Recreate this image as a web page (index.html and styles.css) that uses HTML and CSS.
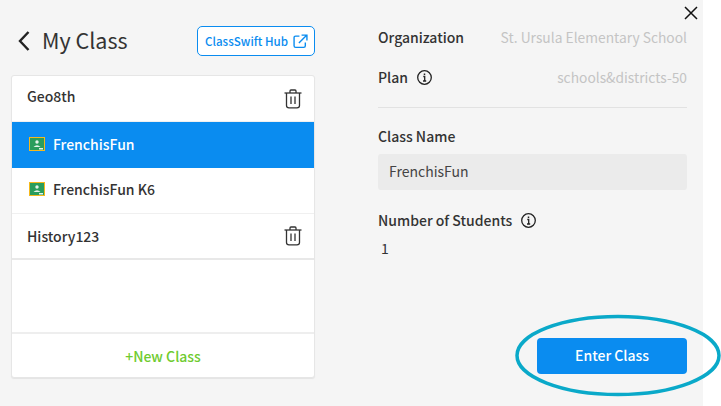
FILE: index.html
```html
<!DOCTYPE html>
<html>
<head>
	<meta charset="utf-8">
	<title>My Class</title>
	<link rel="stylesheet" href="styles.css">
</head>
<body>
	<div class="modal">
		<div class="left">
			<div class="top">
				<div class="title">
					<svg class="back" width="14" height="22" viewBox="0 0 14 22"><path d="M11.500 2 L3 11 L11.500 20" fill="none" stroke="#222" stroke-width="2.400"/></svg>
					<h2>My Class</h2>
				</div>
				<a class="hub">ClassSwift Hub
					<svg width="15" height="15" viewBox="0 0 14 14" fill="none" stroke="#0a8cf0" stroke-width="1.300"><path d="M6 2 H2.500 Q1 2 1 3.500 V11 Q1 12.500 2.500 12.500 H10 Q11.500 12.500 11.500 11 V8"/><path d="M5.500 8.500 L12.500 1.500 M8 1 H13 V6"/></svg>
				</a>
			</div>
			<div class="card">
				<ul>
					<li>
						<span>Geo8th</span>
						<svg class="trash" width="18" height="20" viewBox="0 0 18 20" fill="none" stroke="#333" stroke-width="1.300"><path d="M0.500 4 H17.500"/><path d="M6 4 V2 Q6 1 7 1 H11 Q12 1 12 2 V4"/><path d="M2.500 4 V16.500 Q2.500 18.800 5 18.800 H13 Q15.500 18.800 15.500 16.500 V4"/><path d="M7 7.500 V15 M11 7.500 V15"/></svg>
					</li>
					<li class="active">
						<span class="cname">
							<svg class="gc" width="16" height="14" viewBox="0 0 16 14"><rect x="0.500" y="0.500" width="15" height="13" fill="#2a9d5c" stroke="#f5b81c"/><circle cx="8" cy="5" r="1.700" fill="#e4f3ea"/><path d="M4.500 10 Q8 6.500 11.500 10 Z" fill="#e4f3ea"/><rect x="10" y="11" width="4" height="1.500" fill="#e4f3ea"/></svg>
							FrenchisFun
						</span>
					</li>
					<li>
						<span class="cname">
							<svg class="gc" width="16" height="14" viewBox="0 0 16 14"><rect x="0.500" y="0.500" width="15" height="13" fill="#2a9d5c" stroke="#f5b81c"/><circle cx="8" cy="5" r="1.700" fill="#e4f3ea"/><path d="M4.500 10 Q8 6.500 11.500 10 Z" fill="#e4f3ea"/><rect x="10" y="11" width="4" height="1.500" fill="#e4f3ea"/></svg>
							FrenchisFun K6
						</span>
					</li>
					<li class="last">
						<span>History123</span>
						<svg class="trash" width="18" height="20" viewBox="0 0 18 20" fill="none" stroke="#333" stroke-width="1.300"><path d="M0.500 4 H17.500"/><path d="M6 4 V2 Q6 1 7 1 H11 Q12 1 12 2 V4"/><path d="M2.500 4 V16.500 Q2.500 18.800 5 18.800 H13 Q15.500 18.800 15.500 16.500 V4"/><path d="M7 7.500 V15 M11 7.500 V15"/></svg>
					</li>
				</ul>
				<div class="newclass">+New Class</div>
			</div>
		</div>
		<div class="right">
			<svg class="close" width="14" height="14" viewBox="0 0 14 14"><path d="M1 1 L13 13 M13 1 L1 13" stroke="#111" stroke-width="1.500"/></svg>
			<div class="row">
				<b>Organization</b>
				<span>St. Ursula Elementary School</span>
			</div>
			<div class="row plan">
				<b class="info">Plan
					<svg width="15" height="15" viewBox="0 0 15 15" fill="none" stroke="#222" stroke-width="1.300"><circle cx="7.500" cy="7.500" r="6.800"/><path d="M6.300 6.500 H7.700 V11 M6 11 H9.200"/><path d="M7.500 3.500 V5" stroke-width="1.500"/></svg>
				</b>
				<span>schools&amp;districts-50</span>
			</div>
			<hr>
			<b class="label">Class Name</b>
			<div class="field">FrenchisFun</div>
			<b class="label info">Number of Students
				<svg width="15" height="15" viewBox="0 0 15 15" fill="none" stroke="#222" stroke-width="1.300"><circle cx="7.500" cy="7.500" r="6.800"/><path d="M6.300 6.500 H7.700 V11 M6 11 H9.200"/><path d="M7.500 3.500 V5" stroke-width="1.500"/></svg>
			</b>
			<div class="count">1</div>
			<div class="actions">
				<a class="enter">Enter Class</a>
			</div>
		</div>
	</div>
	<svg class="ring" width="208" height="85" viewBox="0 0 208 85"><ellipse cx="104" cy="42.500" rx="101" ry="39" fill="none" stroke="#0aa9c9" stroke-width="3.500"/></svg>
</body>
</html>
```

FILE: styles.css
```css
*{
	margin: 0;
	padding: 0;
	box-sizing: border-box;
}
html,body{
	height: 100%;
}
body{
	background: #fff;
	font-family: "Noto Sans CJK SC", "Noto Sans", sans-serif;
	color: #333;
	overflow: hidden;
}
.modal{
	display: flex;
	width: 703px;
	height: 406px;
	background: #f5f5f5;
}
.left{
	width: 315px;
	padding: 26px 0 0 11px;
	flex: none;
}
.top{
	display: flex;
	align-items: center;
	justify-content: space-between;
	height: 30px;
	margin-bottom: 19px;
}
.title{
	display: flex;
	align-items: center;
	padding-left: 6px;
}
.back{
	margin-right: 11px;
}
h2{
	font-weight: 400;
	font-size: 21.500px;
	line-height: 30px;
	margin-bottom: 2px;
	color: #333;
}
.hub{
	display: flex;
	align-items: center;
	justify-content: space-between;
	width: 118px;
	height: 30px;
	padding: 0 6px 0 7px;
	border: 1px solid #0a8cf0;
	border-radius: 5px;
	background: #fff;
	color: #0a8cf0;
	font-size: 11.600px;
	font-weight: 500;
	white-space: nowrap;
}
.card{
	height: 303px;
	background: #fff;
	border: 1px solid #e6e6e6;
	border-radius: 3px;
	display: flex;
	flex-direction: column;
	box-shadow: 0 1px 1px #e4e4e4;
}
.card ul{
	flex: 1;
	list-style: none;
}
.card li{
	display: flex;
	align-items: center;
	justify-content: space-between;
	height: 46px;
	padding: 0 12px 0 15px;
	border-bottom: 1px solid #f0f0f0;
	font-size: 14px;
	font-weight: 500;
	color: #333;
}
.card li span{
	margin-bottom: 3px;
}
.card li:first-child span{
	margin-bottom: 5px;
}
.card li.last span{
	margin-bottom: 1px;
}
.card li.last{
	border-bottom: 2px solid #e8e8e8;
}
.card li.active{
	background: #0a8cf0;
	color: #fff;
	border-bottom: 0;
}
.cname{
	display: flex;
	align-items: center;
	gap: 8px;
	padding-left: 2px;
}
.newclass{
	height: 45px;
	line-height: 45px;
	text-align: center;
	border-top: 2px solid #eee;
	color: #6fcb2f;
	font-size: 14px;
	font-weight: 500;
}
.right{
	position: relative;
	flex: 1;
	padding: 26px 16px 0 63px;
	display: flex;
	flex-direction: column;
}
.close{
	position: absolute;
	right: 5px;
	top: 6px;
}
.row{
	display: flex;
	justify-content: space-between;
	align-items: center;
	height: 22px;
	margin-bottom: 18px;
}
.row b,.label{
	font-size: 14px;
	font-weight: 500;
	color: #333;
}
.row span{
	font-size: 13.800px;
	color: #c4c4c4;
}
.info{
	display: flex;
	align-items: center;
	gap: 9px;
}
hr{
	border: 0;
	border-top: 1px solid #e2e2e2;
	margin: 1px 0 17px;
}
.label{
	line-height: 22px;
}
.field{
	height: 36px;
	line-height: 34px;
	margin: 7px 0 19px;
	padding-left: 11px;
	background: #ebebeb;
	border-radius: 3px;
	font-size: 14px;
	color: #444;
}
.count{
	margin-top: 7px;
	padding-left: 3px;
	font-size: 14px;
	line-height: 20px;
}
.actions{
	margin-top: auto;
	margin-bottom: 32px;
	display: flex;
	justify-content: flex-end;
}
.enter{
	display: block;
	width: 150px;
	height: 36px;
	line-height: 34px;
	text-align: center;
	background: #0a8cf0;
	border-radius: 4px;
	color: #fff;
	font-size: 14px;
	font-weight: 500;
}
.ring{
	position: absolute;
	left: 514px;
	top: 313px;
}
```
